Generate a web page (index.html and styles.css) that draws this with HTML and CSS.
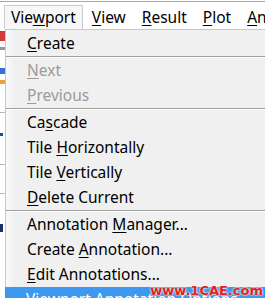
FILE: index.html
```html
<!DOCTYPE html>
<html lang="en">
<head>
  <meta charset="UTF-8">
  <meta name="viewport" content="width=device-width, initial-scale=1.0">
  <title>Viewport menu</title>
  <link rel="stylesheet" href="styles.css">
</head>
<body>

  <!-- верхнє меню -->
  <div class="menubar">
    <div class="top-item open">Vie<u>w</u>port</div>
    <div class="top-item"><u>V</u>iew</div>
    <div class="top-item"><u>R</u>esult</div>
    <div class="top-item"><u>P</u>lot</div>
    <div class="top-item"><u>A</u>n</div>
  </div>

  <div class="main">
    <!-- шматок вікна за меню -->
    <div class="backdrop">
      <div class="bit red"></div>
      <div class="bit grey"></div>
      <div class="bit blue"></div>
      <div class="bit orange"></div>
      <div class="bit line"></div>
      <div class="bit dot"></div>
      <div class="bit line"></div>
      <div class="bit line"></div>
      <div class="bit navy"></div>
    </div>

    <div class="menu">
      <div class="item"><u>C</u>reate</div>
      <div class="sep"></div>
      <div class="item disabled"><u>N</u>ext</div>
      <div class="item disabled"><u>P</u>revious</div>
      <div class="sep"></div>
      <div class="item">Ca<u>s</u>cade</div>
      <div class="item">Tile <u>H</u>orizontally</div>
      <div class="item">Tile <u>V</u>ertically</div>
      <div class="item"><u>D</u>elete Current</div>
      <div class="sep"></div>
      <div class="item">Annotation <u>M</u>anager...</div>
      <div class="item">Create <u>A</u>nnotation...</div>
      <div class="item"><u>E</u>dit Annotations...</div>
      <div class="item active">Viewport Annotation Options...</div>
      <div class="watermark">www.1CAE.com</div>
    </div>
  </div>

</body>
</html>
```

FILE: styles.css
```css
body {
  margin: 0;
  width: 265px;
  height: 298px;
  overflow: hidden;
  background: #fff;
  font-family: "Noto Sans", "Open Sans", sans-serif;
  font-size: 15.5px;
  color: #000;
}
u {
  text-decoration-thickness: 1px;
  text-underline-offset: 2px;
}
.menubar {
  display: flex;
  align-items: flex-end;
  height: 27px;
  border-top: 1px solid #a8a8a8;
  margin-top: 1px;
  padding-left: 4px;
  gap: 2px;
}
.top-item {
  padding: 0 6px 1px;
  line-height: 22px;
  border: 1px solid transparent;
  border-bottom: 0;
}
.top-item.open {
  border-color: #cccccc;
  background: #f7f7f7;
}
.main {
  display: flex;
  height: 269px;
}
.backdrop {
  width: 5px;
  display: flex;
  flex-direction: column;
  gap: 6px;
  padding-top: 2px;
}
.bit {
  height: 4px;
}
.red { background: #d23a3a; height: 10px; }
.grey { background: #8d9bb3; height: 3px; }
.blue { background: #3c6fd6; height: 6px; margin-top: 12px; }
.orange { background: #e8a23a; height: 4px; }
.line { background: #b8b8b8; height: 1px; margin-top: 22px; }
.dot { background: #1c4ea8; height: 3px; width: 3px; margin-top: 14px; }
.navy { background: #1b2f6b; height: 8px; width: 3px; margin-top: 24px; }
.menu {
  flex: 1;
  background: linear-gradient(to right, #fafafa, #f0f0f0 8px);
  border-left: 1px solid #c8c8c8;
  border-top: 1px solid #c8c8c8;
  padding-top: 1px;
  position: relative;
}
.item {
  height: 25px;
  line-height: 24px;
  padding-left: 21px;
  white-space: nowrap;
}
.item.disabled {
  color: #9b9b9b;
}
.item.active {
  background: #3d98f0;
  color: #fff;
  margin-left: -1px;
}
.sep {
  height: 1px;
  background: #a0a0a0;
  border-bottom: 1px solid #fff;
}
.watermark {
  position: absolute;
  right: 2px;
  bottom: 0;
  font-family: "DejaVu Sans", sans-serif;
  font-weight: bold;
  font-size: 13px;
  color: #e0221c;
  text-shadow: 0 0 2px #fff, 0 0 2px #fff;
}
```
